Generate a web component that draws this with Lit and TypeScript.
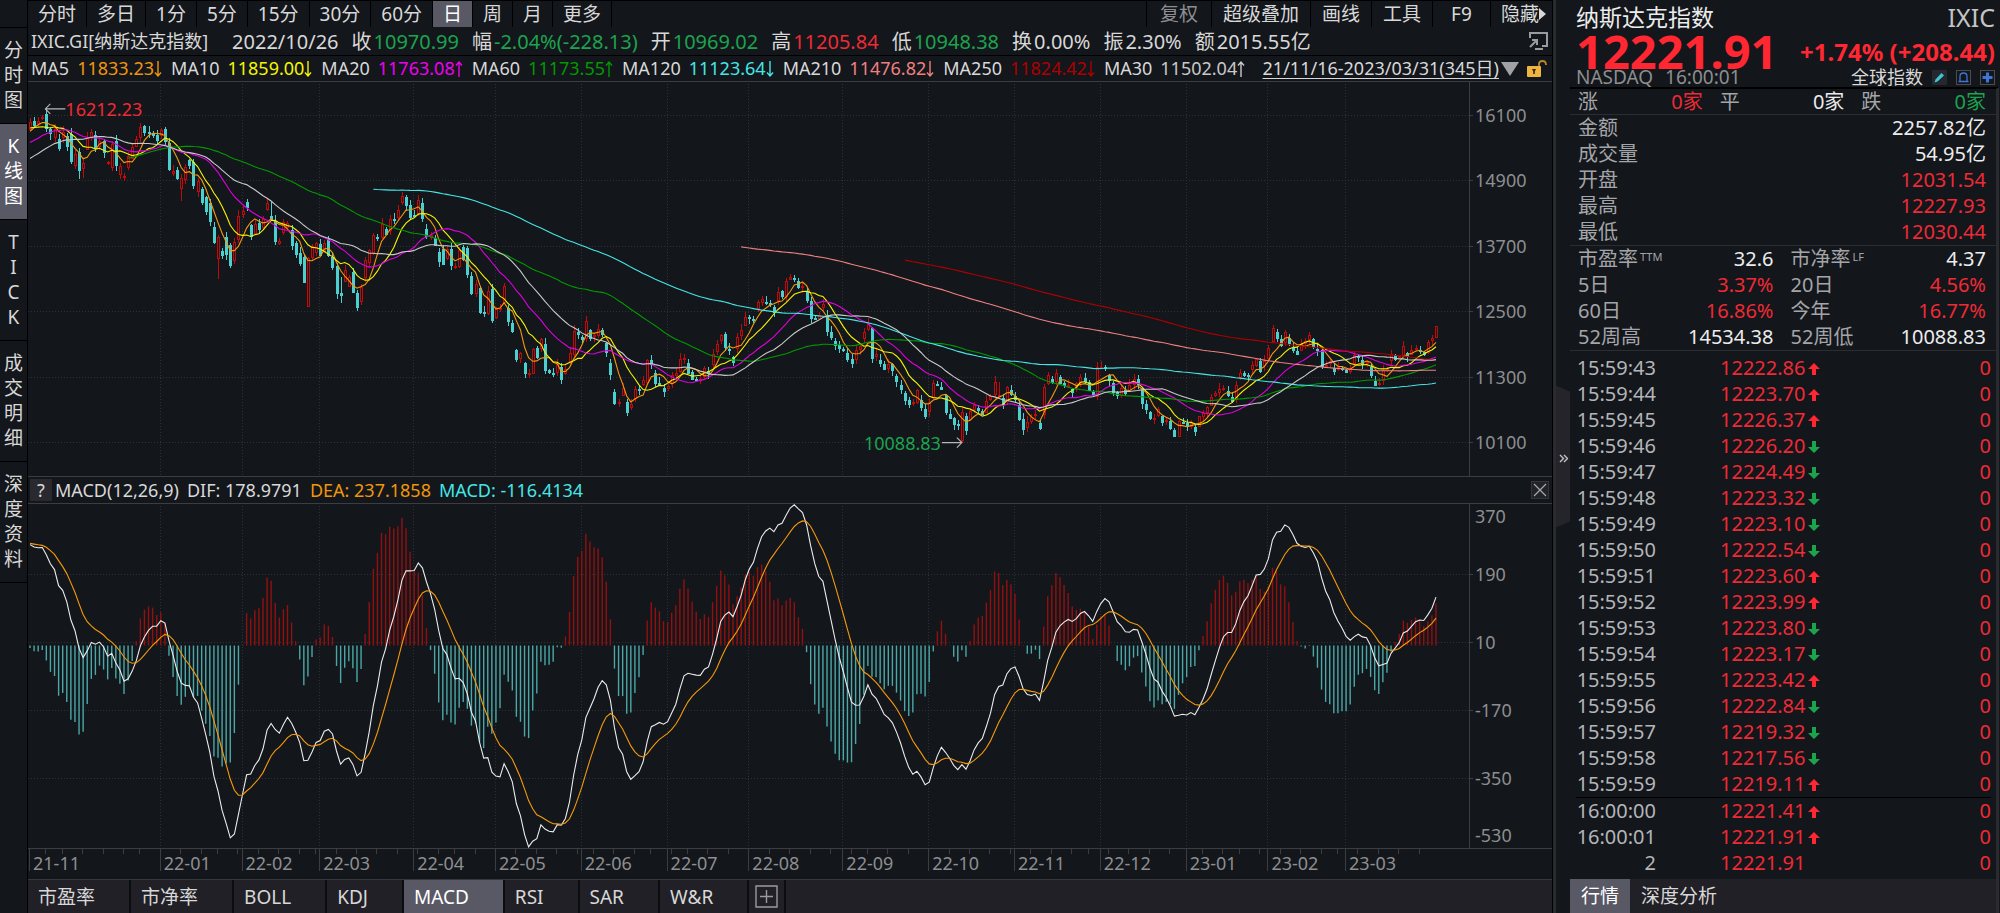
import { LitElement, html, svg, css, nothing } from "lit";
import { customElement, property, state } from "lit/decorators.js";
import { classMap } from "lit/directives/class-map.js";

/* ---------- market data ---------- */

// Closes that precede the visible range; they only feed the averages.
const WARMUP =
  "14546.68 14512.44 14448.58 14566.70 14255.48 14433.83 14501.91 14654.02 14579.54 14486.20 14465.92 14571.63 14823.43 14897.34 15021.81 15129.09 15121.68 15215.70 15090.20 15226.71 15235.71 15235.84 15448.12 15498.39 15595.92 15649.60 15811.58 15940.31 15971.59 15982.36 15886.54 15622.71 15704.28 15860.96 15853.85"
    .split(" ")
    .map(Number);

// One entry per month; "|" opens a new trading week.
const MONTHS: [string, string][] = [
  ["21-11", "15973.86 15921.57 15993.71 16057.44 | 15854.76 15775.14 15845.23 15491.66 | 15782.83 15537.69"],
  ["21-12", "15254.05 15381.32 15085.47 | 15225.15 15686.92 15786.99 15517.37 15630.60 | 15413.28 15237.64 15565.58 15180.43 15169.68 | 14980.94 15341.09 15521.89 15653.37 | 15871.26 15781.72 15766.22 15741.56 15644.97"],
  ["22-01", "| 15832.80 15622.72 15100.17 15080.86 14935.90 | 14942.83 15153.45 15188.39 14806.81 14893.75 | 14506.90 14340.26 14154.02 13768.92 | 13855.13 13539.29 13542.12 13352.78 13770.57 | 14239.88"],
  ["22-02", "14346.00 14417.55 13878.82 14098.01 | 14015.67 14194.46 14490.37 14185.64 13791.15 | 13790.92 14139.76 14124.09 13716.72 13548.07 | 13381.52 13037.49 13473.59 13694.62 | 13751.40"],
  ["22-03", "13532.46 13752.02 13537.94 13313.44 | 12830.96 12795.55 13255.55 13129.96 12843.81 | 12581.22 12948.62 13436.55 13614.78 13893.84 | 13838.46 14108.82 13922.60 14191.84 14169.30 | 14354.90 14619.64 14442.27 14220.52"],
  ["22-04", "14261.50 | 14532.55 14204.17 13888.82 13897.30 13711.00 | 13411.96 13371.57 13643.59 13351.08 | 13332.36 13619.66 13453.07 13174.65 12839.29 | 13004.85 12490.74 12488.93 12871.53 12334.64"],
  ["22-05", "| 12536.02 12563.76 12964.86 12317.69 12144.66 | 11623.25 11737.67 11364.24 11370.96 11805.00 | 11662.79 11984.52 11418.15 11388.50 11354.62 | 11535.27 11264.45 11434.74 11740.65 12131.13 | 12081.39"],
  ["22-06", "11994.46 12316.90 12012.73 | 12061.37 12175.23 12086.27 11754.23 11340.02 | 10809.23 10828.35 11099.15 10646.10 10798.35 | 11069.30 11053.08 11232.19 11607.62 | 11524.55 11181.54 11177.89 11028.74"],
  ["22-07", "11127.85 | 11322.24 11361.85 11621.35 11635.31 | 11372.60 11264.73 11247.58 11251.19 11452.42 | 11360.05 11713.15 11897.65 12059.61 11834.11 | 11782.67 11562.57 12032.42 12162.59 12390.69"],
  ["22-08", "| 12368.98 12348.76 12668.16 12720.58 12657.55 | 12644.46 12493.93 12854.80 12779.91 13047.19 | 13128.05 13102.55 12938.12 12965.34 12705.22 | 12381.57 12381.30 12431.53 12639.27 12141.71 | 12017.67 11883.14 11816.20"],
  ["22-09", "11785.13 11630.86 | 11544.91 11791.90 11862.13 12112.31 | 12266.41 11633.57 11719.68 11552.36 11448.40 | 11535.02 11425.05 11220.19 11066.81 10867.93 | 10802.92 10829.50 11051.64 10737.51 10575.62"],
  ["22-10", "| 10815.44 11176.41 11148.64 11073.31 10652.41 | 10542.10 10426.19 10417.10 10649.15 10321.39 | 10675.80 10772.40 10680.51 10614.84 10859.72 | 10952.61 11199.12 10970.99 10792.68 11102.45 | 10988.15"],
  ["22-11", "10890.85 10524.80 10342.94 10475.25 | 10564.52 10616.20 10353.17 11114.15 11323.33 | 11196.22 11358.41 11183.66 11144.96 11146.06 | 11024.51 11174.41 11285.32 11226.36 | 11049.50 10983.78 11468.00"],
  ["22-12", "11482.45 11461.50 | 11239.94 11014.89 10958.55 11082.00 11004.62 | 11143.74 11256.81 11170.89 10810.53 10705.41 | 10546.03 10547.11 10709.37 10476.12 10497.86 | 10353.23 10213.29 10478.09 10466.48"],
  ["23-01", "| 10386.99 10458.76 10305.24 10569.29 | 10635.65 10742.63 10931.67 11001.10 11079.16 | 11095.11 10957.01 10852.27 11140.43 | 11364.41 11334.27 11313.36 11512.41 11621.71 | 11393.81 11584.55"],
  ["23-02", "11816.32 12200.82 12006.95 | 11887.45 12113.79 11910.52 11789.58 11718.12 | 11891.79 11960.15 12070.59 11855.83 11787.27 | 11492.30 11507.07 11590.40 11394.94 | 11466.98 11455.54"],
  ["23-03", "11379.48 11462.98 11689.01 | 11675.74 11530.33 11576.00 11338.35 11138.89 | 11188.84 11428.15 11434.05 11717.28 11630.51 | 11675.54 11860.11 11669.96 11787.40 11823.96 | 11768.84 11716.08 11926.24 12013.47 12221.91"],
];

const OPENS =
  "15850 15990 15960 16040 16120 15840 15700 15660 15700 15720 15750 15180 15430 15120 15480 15690 15740 15540 15630 15220 15150 15630 15020 14970 15150 15320 15540 15700 15900 15790 15760 15730 15730 15850 15590 15030 15090 14760 14920 15270 15240 14700 14750 14600 14480 14050 13485 13600 13870 13710 13440 13820 14280 14500 14080 13940 14120 14050 14370 14250 14150 13750 13960 14050 13990 13750 13570 13500 12587 13490 13580 13730 13600 13830 13490 13330 12840 13050 12970 13220 12840 12680 13130 13410 13590 13870 13870 14000 13990 14190 14230 14500 14590 14450 14270 14300 14490 14000 13870 13850 13580 13650 13470 13650 13320 13330 13670 13660 13140 12830 12920"
    .split(" ")
    .map(Number);

interface Bar {
  o: number;
  h: number;
  l: number;
  c: number;
}

const RANGES: Record<number, Partial<Bar>> = {
  4: { h: 16212.23 },
  5: { l: 15640 },
  6: { l: 15600 },
  12: { l: 14930 },
  13: { l: 14950 },
  20: { l: 15080 },
  37: { l: 14530 },
  46: { l: 13095 },
  59: { h: 14509 },
  68: { l: 12587 },
  76: { h: 13130, l: 12650 },
  228: { o: 10135, l: 10088.83 },
  237: { o: 10969.02, h: 11205.84, l: 10948.38 },
  344: { o: 12031.54, h: 12227.93, l: 12030.44 },
};

const closes: number[] = [];
const monthStarts: { index: number; label: string }[] = [];
const weekStarts: number[] = [];
for (const [label, body] of MONTHS) {
  monthStarts.push({ index: closes.length, label });
  for (const token of body.split(" ")) {
    if (token === "|") weekStarts.push(closes.length);
    else closes.push(Number(token));
  }
}

const noise = (n: number) => {
  const v = Math.sin(n * 12.9898) * 43758.5453;
  return v - Math.floor(v);
};

const bars: Bar[] = closes.map((c, i) => {
  const prev = i ? closes[i - 1] : WARMUP[WARMUP.length - 1];
  const known = RANGES[i] ?? {};
  const o = known.o ?? OPENS[i] ?? prev + (c - prev) * (noise(i) * 0.8 - 0.1);
  const h = known.h ?? Math.max(o, c) + 15 + noise(i + 500) * 95;
  const l = known.l ?? Math.min(o, c) - 15 - noise(i + 900) * 95;
  return { o, h, l, c };
});

const series = [...WARMUP, ...closes];
const LEAD = WARMUP.length;

const movingAverage = (span: number) =>
  closes.map((_, i) => {
    const end = i + LEAD + 1;
    if (end < span) return NaN;
    let sum = 0;
    for (let k = end - span; k < end; k++) sum += series[k];
    return sum / span;
  });

const ema = (values: number[], span: number, seed: number) => {
  let last = seed;
  return values.map((v) => (last += ((v - last) * 2) / (span + 1)));
};

const fast = ema(series, 12, 14930);
const slow = ema(series, 26, 14700);
const difAll = fast.map((v, i) => v - slow[i]);
const deaAll = ema(difAll, 9, 20);
const dif = difAll.slice(LEAD);
const dea = deaAll.slice(LEAD);

const AVERAGES: [string, number[]][] = [
  ["ma5", movingAverage(5)],
  ["ma10", movingAverage(10)],
  ["ma20", movingAverage(20)],
  ["ma60", movingAverage(60)],
  ["ma120", movingAverage(120)],
  ["ma210", movingAverage(210)],
  ["ma250", movingAverage(250)],
  ["ma30", movingAverage(30)],
];

/* ---------- chart geometry ---------- */

const FIRST_X = 2;
const PRICE_AXIS = 83;
const TAIL = 33;

const snap = (v: number) => Math.round(v) + 0.5;

abstract class ChartBase extends LitElement {
  @state() protected w = 1524;
  @state() protected h = 300;
  private watcher?: ResizeObserver;

  connectedCallback() {
    super.connectedCallback();
    this.watcher = new ResizeObserver(() => this.measure());
    this.watcher.observe(this);
  }
  disconnectedCallback() {
    super.disconnectedCallback();
    this.watcher?.disconnect();
  }
  private measure() {
    this.w = this.clientWidth;
    this.h = this.clientHeight;
  }
  protected get axisX() {
    return this.w - PRICE_AXIS;
  }
  protected x(i: number) {
    return FIRST_X + (i * (this.axisX - TAIL - FIRST_X)) / (closes.length - 1);
  }
  protected path(values: number[], y: (v: number) => number) {
    let d = "";
    values.forEach((v, i) => {
      if (!Number.isNaN(v)) d += `${d ? "L" : "M"}${this.x(i).toFixed(1)} ${y(v).toFixed(1)}`;
    });
    return d;
  }
  protected grid(levels: { y: number; label: string; line: boolean }[]) {
    return svg`
      ${monthStarts.slice(2).map(
        (m) => svg`<line class="grid" x1=${snap(this.x(m.index) - 1)} x2=${snap(this.x(m.index) - 1)} y1="2" y2=${this.h}></line>`
      )}
      ${levels.map(
        (l) => svg`
          ${l.line ? svg`<line class="grid" x1="0" x2=${this.axisX} y1=${snap(l.y)} y2=${snap(l.y)}></line>
          <line class="axis" x1=${this.axisX} x2=${this.axisX + 4} y1=${snap(l.y)} y2=${snap(l.y)}></line>` : nothing}
          <text class="level" x=${this.axisX + 6} y=${Math.min(Math.max(l.y, 12), this.h - 13) + 7}>${l.label}</text>`
      )}
      <line class="axis" x1=${snap(this.axisX)} x2=${snap(this.axisX)} y1="0" y2=${this.h}></line>`;
  }
}

const chartStyles = css`
  :host {
    display: block;
    min-width: 0;
    min-height: 0;
    overflow: hidden;
  }
  svg {
    display: block;
    width: 100%;
    height: 100%;
  }
  text {
    font-family: "Noto Sans", "Noto Sans CJK SC", sans-serif;
    font-size: 18px;
  }
  .level {
    fill: #8d8e90;
  }
  .grid {
    stroke: #2f3135;
    stroke-width: 1;
    stroke-dasharray: 1 2;
  }
  .axis {
    stroke: #3c3d41;
    stroke-width: 1;
  }
  path {
    fill: none;
    stroke-width: 1.1;
  }
`;

@customElement("price-chart")
export class PriceChart extends ChartBase {
  static styles = [
    chartStyles,
    css`
      .up {
        stroke: #c20a0a;
        fill: #13161b;
      }
      .down {
        stroke: #4ccfcf;
        fill: #4ccfcf;
      }
      .candles {
        shape-rendering: crispEdges;
      }
      .ma5 { stroke: #f59a0c; }
      .ma10 { stroke: #f5f500; }
      .ma20 { stroke: #e000e0; }
      .ma60 { stroke: #009a00; }
      .ma120 { stroke: #45e6e6; }
      .ma210 { stroke: #f08080; }
      .ma250 { stroke: #ad0000; }
      .ma30 { stroke: #c9c9c9; }
      .high { fill: #ee2a35; }
      .low { fill: #1ca34e; }
      .pointer { stroke: #b8b8b8; }
    `,
  ];

  render() {
    const top = 33 / 394;
    const y = (v: number) => this.h * (top + ((16100 - v) / 6000) * (327 / 394));
    const levels = [16100, 14900, 13700, 12500, 11300, 10100].map((v) => ({ y: y(v), label: String(v), line: true }));
    const peak = { x: this.x(4) - 1, y: y(16212.23) };
    const trough = { x: this.x(228), y: y(10088.83) };
    return html`<svg role="img" aria-label="K线图">
      ${this.grid(levels)}
      <g class="candles">
        ${bars.map((b, i) => {
          const x = Math.round(this.x(i));
          const hi = Math.round(y(Math.max(b.o, b.c)));
          const lo = Math.max(Math.round(y(Math.min(b.o, b.c))), hi + 1);
          return svg`<g class=${b.c >= b.o ? "up" : "down"}>
            <line x1=${x + 0.5} x2=${x + 0.5} y1=${y(b.h)} y2=${y(b.l)}></line>
            <rect x=${x - 0.5} y=${hi + 0.5} width="2" height=${lo - hi}></rect></g>`;
        })}
      </g>
      ${AVERAGES.map(([name, values]) => svg`<path class=${name} d=${this.path(values, y)}></path>`)}
      <path class="pointer" d="M${peak.x + 20} ${peak.y}H${peak.x}m5 -5l-5 5l5 5"></path>
      <text class="high" x=${peak.x + 20} y=${peak.y + 7}>16212.23</text>
      <path class="pointer" d="M${trough.x - 20} ${trough.y}H${trough.x}m-5 -5l5 5l-5 5"></path>
      <text class="low" text-anchor="end" x=${trough.x - 21} y=${trough.y + 7}>10088.83</text>
    </svg>`;
  }
}

@customElement("macd-chart")
export class MacdChart extends ChartBase {
  static styles = [
    chartStyles,
    css`
      .gain { stroke: #94100f; }
      .loss { stroke: #4aa9a8; }
      .dif { stroke: #ececec; }
      .dea { stroke: #f59a0c; }
      .bars { stroke-width: 1.4; }
    `,
  ];

  render() {
    const y = (v: number) => (this.h * (1.5 + (370 - v) * 0.3785)) / 344;
    const levels = [370, 190, 10, -170, -350, -530].map((v) => ({
      y: y(v),
      label: String(v),
      line: v !== 370 && v !== -530,
    }));
    return html`<svg role="img" aria-label="MACD">
      ${this.grid(levels)}
      <g class="bars">
        ${dif.map((v, i) => {
          const m = 2 * (v - dea[i]);
          return svg`<line class=${m >= 0 ? "gain" : "loss"} x1=${this.x(i)} x2=${this.x(i)} y1=${y(0)} y2=${y(m)}></line>`;
        })}
      </g>
      <path class="dif" d=${this.path(dif, y)}></path>
      <path class="dea" d=${this.path(dea, y)}></path>
    </svg>`;
  }
}

@customElement("time-axis")
export class TimeAxis extends ChartBase {
  static styles = [chartStyles];

  render() {
    const labelled = monthStarts.filter((m) => m.label !== "21-12");
    return html`<svg role="img" aria-label="日期">
      ${weekStarts.map((i) => svg`<line class="axis" x1=${snap(this.x(i) - 1)} x2=${snap(this.x(i) - 1)} y1="0" y2="5"></line>`)}
      ${labelled.map(
        (m) => svg`<line class="axis" x1=${snap(this.x(m.index) - 1)} x2=${snap(this.x(m.index) - 1)} y1="0" y2="22"></line>
          <text class="level" x=${this.x(m.index) + 3} y="21">${m.label}</text>`
      )}
    </svg>`;
  }
}

/* ---------- page ---------- */

const PERIODS = ["分时", "多日", "1分", "5分", "15分", "30分", "60分", "日", "周", "月", "更多"];
const TOOLS = ["复权", "超级叠加", "画线", "工具", "F9", "隐藏"];
const VIEWS = ["分时图", "K线图", "TICK", "成交明细", "深度资料"];
const INDICATORS = ["市盈率", "市净率", "BOLL", "KDJ", "MACD", "RSI", "SAR", "W&R"];

const QUOTE: [string, string, string][] = [
  ["收", "10970.99", "green"],
  ["幅", "-2.04%(-228.13)", "green"],
  ["开", "10969.02", "green"],
  ["高", "11205.84", "red"],
  ["低", "10948.38", "green"],
  ["换", "0.00%", "plain"],
  ["振", "2.30%", "plain"],
  ["额", "2015.55亿", "plain"],
];

const LEGEND: [string, string, "up" | "down", string][] = [
  ["MA5", "11833.23", "down", "ma5"],
  ["MA10", "11859.00", "down", "ma10"],
  ["MA20", "11763.08", "up", "ma20"],
  ["MA60", "11173.55", "up", "ma60"],
  ["MA120", "11123.64", "down", "ma120"],
  ["MA210", "11476.82", "down", "ma210"],
  ["MA250", "11824.42", "down", "ma250"],
  ["MA30", "11502.04", "up", "ma30"],
];

const TOTALS: [string, string, string][] = [
  ["金额", "2257.82亿", "bright"],
  ["成交量", "54.95亿", "bright"],
  ["开盘", "12031.54", "red"],
  ["最高", "12227.93", "red"],
  ["最低", "12030.44", "red"],
];

const RATIOS: [string, string, string, string][] = [
  ["市盈率", "TTM", "32.6", "bright"],
  ["市净率", "LF", "4.37", "bright"],
  ["5日", "", "3.37%", "red"],
  ["20日", "", "4.56%", "red"],
  ["60日", "", "16.86%", "red"],
  ["今年", "", "16.77%", "red"],
  ["52周高", "", "14534.38", "bright"],
  ["52周低", "", "10088.83", "bright"],
];

const TICKS: [string, string, "up" | "down" | ""][] = [
  ["15:59:43", "12222.86", "up"],
  ["15:59:44", "12223.70", "up"],
  ["15:59:45", "12226.37", "up"],
  ["15:59:46", "12226.20", "down"],
  ["15:59:47", "12224.49", "down"],
  ["15:59:48", "12223.32", "down"],
  ["15:59:49", "12223.10", "down"],
  ["15:59:50", "12222.54", "down"],
  ["15:59:51", "12223.60", "up"],
  ["15:59:52", "12223.99", "up"],
  ["15:59:53", "12223.80", "down"],
  ["15:59:54", "12223.17", "down"],
  ["15:59:55", "12223.42", "up"],
  ["15:59:56", "12222.84", "down"],
  ["15:59:57", "12219.32", "down"],
  ["15:59:58", "12217.56", "down"],
  ["15:59:59", "12219.11", "up"],
  ["16:00:00", "12221.41", "up"],
  ["16:00:01", "12221.91", "up"],
  ["2", "12221.91", ""],
];

const thinArrow = (dir: "up" | "down") => html`<svg class="thin" viewBox="0 0 8 18" aria-hidden="true">
  <path d=${dir === "up" ? "M4 17V2M1 5.5L4 2L7 5.5" : "M4 1V16M1 12.5L4 16L7 12.5"}></path>
</svg>`;

const blockArrow = (dir: "up" | "down") => html`<svg class="block ${dir}" viewBox="0 0 12 12" aria-hidden="true">
  <path d=${dir === "up" ? "M6 0L12 6H8V12H4V6H0Z" : "M6 12L12 6H8V0H4V6H0Z"}></path>
</svg>`;

@customElement("app-root")
export class AppRoot extends LitElement {
  @property() period = "日";
  @property() view = "K线图";
  @property() indicator = "MACD";
  @property() pane = "行情";

  static styles = css`
    :host {
      display: grid;
      grid-template-columns: 28px minmax(0, 1fr) 18px 430px;
      height: 100vh;
      overflow: hidden;
      background: #13161b;
      color: #d8d8d8;
      font: 19px/25px "Noto Sans", "Noto Sans CJK SC", sans-serif;
      white-space: nowrap;
    }
    * {
      box-sizing: border-box;
    }
    button {
      margin: 0;
      padding: 0;
      border: 0;
      background: none;
      color: inherit;
      font: inherit;
      cursor: pointer;
    }
    .red { color: #ee2a35; }
    .green { color: #1ca34e; }
    .bright { color: #ececec; }
    .ma5 { color: #f0960c; }
    .ma10 { color: #f5f500; }
    .ma20 { color: #f000f0; }
    .ma60 { color: #009a00; }
    .ma120 { color: #45e6e6; }
    .ma210 { color: #f08080; }
    .ma250 { color: #ad0000; }
    .ma30 { color: #c9c9c9; }

    .views {
      display: flex;
      flex-direction: column;
      padding-top: 27px;
      border-right: 1px solid #000;
    }
    .views button {
      padding: 10px 0;
      border-top: 1px solid #000;
      line-height: 25px;
      text-align: center;
    }
    .views button:last-child {
      border-bottom: 1px solid #000;
    }
    .views span {
      display: block;
    }
    .views .on,
    .periods .on,
    .indicators .on,
    .panes .on {
      background: #595865;
      color: #fff;
    }

    .main {
      display: grid;
      grid-template-columns: minmax(0, 1fr);
      grid-template-rows: 27px 28px 27px minmax(0, 394fr) 28px minmax(0, 344fr) 31px 34px;
      min-width: 0;
    }
    .periods {
      display: flex;
      border-top: 1px solid #000;
    }
    .periods button {
      padding: 0 10px;
      border-right: 1px solid #000;
      line-height: 26px;
    }
    .tools {
      display: flex;
      margin-left: auto;
      border-left: 1px solid #000;
    }
    .tools button {
      min-width: 58px;
      padding: 0 11px;
    }
    .tools button:first-child {
      padding: 0 13px;
      color: #8d8e90;
    }
    .tools button:last-child {
      display: flex;
      align-items: center;
      border-right: 0;
      padding: 0 6px 0 10px;
    }
    .tools svg {
      width: 7px;
      height: 12px;
      fill: #d8d8d8;
    }

    .quote {
      display: flex;
      align-items: center;
      padding: 0 4px 0 3px;
      font-size: 20px;
    }
    .quote .name {
      margin-right: 24px;
      font-size: 18px;
    }
    .quote .date,
    .quote .cell {
      margin-right: 13px;
    }
    .quote .cell span {
      margin-left: 2px;
    }
    .quote .popout {
      display: flex;
      margin-left: auto;
    }
    .popout svg {
      width: 20px;
      height: 20px;
      fill: none;
      stroke: #9a9ba0;
      stroke-width: 2;
    }

    .legend {
      display: flex;
      align-items: center;
      padding: 0 5px 0 3px;
      border-top: 1px solid #000;
      border-bottom: 1px solid #3c3d41;
      font-size: 18px;
    }
    .legend .entry {
      display: flex;
      align-items: center;
      margin-right: 9px;
    }
    .legend .value {
      display: flex;
      align-items: center;
      margin-left: 8px;
    }
    .thin {
      width: 8px;
      height: 18px;
      fill: none;
      stroke: currentColor;
      stroke-width: 1.4;
    }
    .legend .range {
      margin-left: auto;
      color: #d8d8d8;
      text-decoration: underline;
      text-underline-offset: 3px;
    }
    .legend .drop {
      flex: none;
      width: 18px;
      height: 14px;
      margin: 0 8px 0 2px;
      fill: #a2a2a4;
    }
    .legend .lock {
      flex: none;
      width: 20px;
      height: 18px;
    }

    .macd-head {
      display: flex;
      align-items: center;
      gap: 8px;
      padding: 0 3px 0 2px;
      border-top: 1px solid #3c3d41;
      border-bottom: 1px solid #3c3d41;
      font-size: 18px;
    }
    .macd-head .help {
      width: 22px;
      height: 22px;
      margin-right: -5px;
      background: #2a2930;
      line-height: 22px;
    }
    .macd-head .close {
      display: flex;
      width: 18px;
      height: 18px;
      margin-left: auto;
      border: 1px solid #34353a;
      background: #222329;
    }
    .close svg {
      width: 16px;
      height: 16px;
      stroke: #a8a8a8;
      stroke-width: 1.2;
    }
    time-axis {
      border-top: 1px solid #3c3d41;
    }

    .indicators {
      display: flex;
      border-top: 1px solid #36373b;
      background: #212026;
    }
    .indicators button {
      padding: 0 34px 0 10px;
      border-right: 2px solid #0b0c0e;
      line-height: 34px;
    }
    .indicators .add {
      display: flex;
      align-items: center;
      padding: 0 6px;
    }
    .add svg {
      width: 23px;
      height: 23px;
      fill: none;
      stroke: #9a9ba0;
      stroke-width: 1.4;
    }

    .gutter {
      display: flex;
      align-items: center;
      border-left: 1px solid #000;
      box-shadow: inset 3px 0 0 #2a2b2f;
    }
    .gutter button {
      width: 14px;
      height: 142px;
      margin-left: 3px;
      background: #25242b;
      clip-path: polygon(0 0, 100% 6px, 100% 136px, 0 100%);
    }
    .gutter svg {
      width: 9px;
      height: 9px;
      fill: none;
      stroke: #c4c4c4;
      stroke-width: 1.4;
    }

    .side {
      display: flex;
      flex-direction: column;
      min-width: 0;
    }
    .title {
      display: grid;
      grid-template-columns: 1fr auto;
      grid-template-rows: 34px 34px 19px;
      align-items: center;
      padding: 0 5px 0 6px;
    }
    .title h1 {
      margin: 0;
      color: #ececec;
      font-size: 23px;
      font-weight: 400;
    }
    .title .code {
      color: #c4c4c4;
      font-size: 25px;
      text-align: right;
    }
    .title .last {
      color: #ff2832;
      font-size: 47px;
      font-weight: 700;
    }
    .title .change {
      color: #ff2832;
      font-size: 24px;
      font-weight: 700;
    }
    .title .market {
      display: flex;
      gap: 12px;
      color: #8d8e90;
      font-size: 19px;
    }
    .title .scope {
      display: flex;
      align-items: center;
      justify-content: flex-end;
      gap: 9px;
      font-size: 18px;
    }
    .scope button {
      display: flex;
    }
    .scope svg {
      width: 15px;
      height: 15px;
    }
    .body {
      display: flex;
      flex: 1;
      flex-direction: column;
      margin-right: 1px;
      border-top: 2px solid #000;
      border-right: 3px solid #2a2b2f;
      font-size: 20px;
      line-height: 26px;
    }
    .breadth,
    .totals,
    .ratios {
      display: grid;
      margin: 0;
      padding: 0 10px 0 8px;
      border-bottom: 1px solid #2b2d31;
      column-gap: 17px;
      color: #a4a5a8;
    }
    .breadth {
      grid-template-columns: repeat(3, 1fr);
      line-height: 25px;
    }
    .ratios {
      grid-template-columns: repeat(2, 1fr);
    }
    .pair {
      display: flex;
      justify-content: space-between;
    }
    .pair dt,
    .pair dd {
      margin: 0;
    }
    .pair dt {
      display: flex;
    }
    .pair small {
      font-size: 11px;
      line-height: 22px;
      margin-left: 2px;
    }
    .ticks {
      width: 100%;
      margin-top: 4px;
      padding: 0 5px 0 6px;
      border-collapse: separate;
      border-spacing: 0;
      color: #ee2a35;
    }
    .ticks td {
      height: 26px;
      padding: 0;
    }
    .ticks .time {
      width: 80px;
      color: #b4b5b8;
      text-align: right;
    }
    .ticks .price {
      padding-left: 64px;
    }
    .ticks .vol {
      text-align: right;
    }
    .ticks .cut td {
      border-top: 1px solid #000;
    }
    .block {
      width: 12px;
      height: 12px;
      margin-left: 3px;
    }
    .block.up { fill: #ff2832; }
    .block.down { fill: #1ca34e; }
    .panes {
      display: flex;
      height: 34px;
      margin-top: auto;
      background: #212026;
      font-size: 19px;
    }
    .panes button {
      padding: 0 11px;
      line-height: 34px;
    }
  `;

  private tab(name: string, current: string, pick: () => void) {
    return html`<button class=${classMap({ on: name === current })} @click=${pick}>${name}</button>`;
  }

  render() {
    return html`
      <nav class="views">
        ${VIEWS.map(
          (v) => html`<button class=${classMap({ on: v === this.view })} aria-label=${v} @click=${() => (this.view = v)}>
            ${[...v].map((ch) => html`<span>${ch}</span>`)}
          </button>`
        )}
      </nav>

      <main class="main">
        <div class="periods">
          ${PERIODS.map((p) => this.tab(p, this.period, () => (this.period = p)))}
          <div class="tools">
            ${TOOLS.map(
              (t) => html`<button>${t}${t === "隐藏" ? html`<svg viewBox="0 0 7 12"><path d="M0 0L7 6L0 12Z"></path></svg>` : nothing}</button>`
            )}
          </div>
        </div>

        <div class="quote">
          <span class="name">IXIC.GI[纳斯达克指数]</span>
          <span class="date">2022/10/26</span>
          ${QUOTE.map(([k, v, tone]) => html`<span class="cell">${k}<span class=${tone}>${v}</span></span>`)}
          <button class="popout" aria-label="弹出窗口">
            <svg viewBox="0 0 20 20"><path d="M2 7V2H19V15H14M7 18H15M2 16L9 9M4 9H9V14"></path></svg>
          </button>
        </div>

        <div class="legend">
          ${LEGEND.map(
            ([k, v, dir, tone]) => html`<span class="entry">${k}<span class="value ${tone}">${v}${thinArrow(dir)}</span></span>`
          )}
          <a class="range" href="#range">21/11/16-2023/03/31(345日)</a>
          <svg class="drop" viewBox="0 0 18 14"><path d="M0 0H18L9 14Z"></path></svg>
          <svg class="lock" viewBox="0 0 20 18">
            <path d="M12 8V4Q12 1 15.500 1Q19 1 19 5" fill="none" stroke="#b8862c" stroke-width="1.800"></path>
            <rect x="0" y="6" width="14" height="11" rx="1" fill="#f0b440"></rect>
            <path d="M5 9H9L7.800 11.500V14H6.200V11.500Z" fill="#3a2b0c"></path>
          </svg>
        </div>

        <price-chart></price-chart>

        <div class="macd-head">
          <button class="help" aria-label="说明">?</button>
          <span>MACD(12,26,9)</span>
          <span>DIF: 178.9791</span>
          <span class="ma5">DEA: 237.1858</span>
          <span class="ma120">MACD: -116.4134</span>
          <button class="close" aria-label="关闭"><svg viewBox="0 0 16 16"><path d="M2 2L14 14M14 2L2 14"></path></svg></button>
        </div>

        <macd-chart></macd-chart>
        <time-axis></time-axis>

        <div class="indicators">
          ${INDICATORS.map((t) => this.tab(t, this.indicator, () => (this.indicator = t)))}
          <button class="add" aria-label="添加指标">
            <svg viewBox="0 0 23 23"><path d="M1 1H22V22H1ZM11.500 5V18M5 11.500H18"></path></svg>
          </button>
        </div>
      </main>

      <div class="gutter">
        <button aria-label="收起"><svg viewBox="0 0 9 9"><path d="M1 1L4.500 4.500L1 8M5 1L8.500 4.500L5 8"></path></svg></button>
      </div>

      <aside class="side">
        <header class="title">
          <h1>纳斯达克指数</h1>
          <span class="code">IXIC</span>
          <span class="last">12221.91</span>
          <span class="change">+1.74% (+208.44)</span>
          <span class="market"><span>NASDAQ</span><span>16:00:01</span></span>
          <span class="scope">
            全球指数
            <button aria-label="编辑"><svg viewBox="0 0 15 15"><rect width="15" height="15" fill="#26282f"></rect><path d="M2.500 12.500L3.500 9.500L9.500 3L12 5.500L5.500 11.500Z" fill="#3fc6d6"></path></svg></button>
            <button aria-label="提醒"><svg viewBox="0 0 15 15" fill="none"><rect x=".5" y=".5" width="14" height="14" stroke="#4a4c52"></rect><path d="M2.500 11.500H12.500M4 11V6.500Q4 3 7.500 3Q11 3 11 6.500V11" stroke="#3d74d8" stroke-width="1.300"></path></svg></button>
            <button aria-label="添加自选"><svg viewBox="0 0 15 15" fill="none"><rect x=".5" y=".5" width="14" height="14" stroke="#4a4c52"></rect><path d="M7.500 2.500V12.500M2.500 7.500H12.500" stroke="#3d74d8" stroke-width="3"></path></svg></button>
          </span>
        </header>

        <div class="body">
          <dl class="breadth">
            <div class="pair"><dt>涨</dt><dd class="red">0家</dd></div>
            <div class="pair"><dt>平</dt><dd class="bright">0家</dd></div>
            <div class="pair"><dt>跌</dt><dd class="green">0家</dd></div>
          </dl>
          <dl class="totals">
            ${TOTALS.map(([k, v, tone]) => html`<div class="pair"><dt>${k}</dt><dd class=${tone}>${v}</dd></div>`)}
          </dl>
          <dl class="ratios">
            ${RATIOS.map(
              ([k, note, v, tone]) =>
                html`<div class="pair"><dt>${k}${note ? html`<small>${note}</small>` : nothing}</dt><dd class=${tone}>${v}</dd></div>`
            )}
          </dl>
          <table class="ticks">
            <tbody>
              ${TICKS.map(
                ([time, price, dir]) => html`<tr class=${classMap({ cut: time === "16:00:00" })}>
                  <td class="time">${time}</td>
                  <td class="price">${price}${dir ? blockArrow(dir) : nothing}</td>
                  <td class="vol">0</td>
                </tr>`
              )}
            </tbody>
          </table>
          <nav class="panes">
            ${["行情", "深度分析"].map((p) => this.tab(p, this.pane, () => (this.pane = p)))}
          </nav>
        </div>
      </aside>
    `;
  }
}
